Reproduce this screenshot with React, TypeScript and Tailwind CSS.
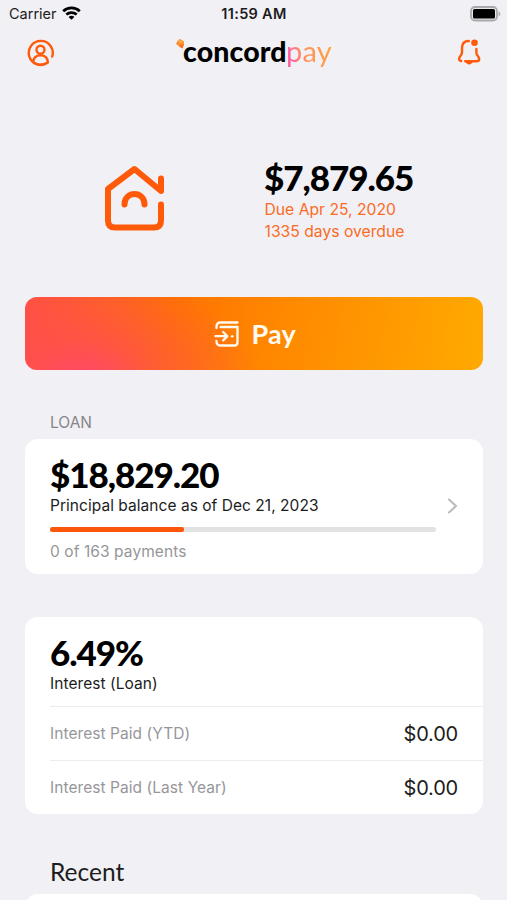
import type { ReactNode } from "react";

const display = "font-['Lato','Liberation_Sans',sans-serif]";

function StatusBar() {
  return (
    <div className="grid h-7 grid-cols-3 items-center pl-[9px] pr-[6px] text-[#1c1c1e]">
      <div className="flex items-center gap-[5px]">
        <span className="text-[14.5px] leading-7">Carrier</span>
        <svg className="-mt-[2px]" width="19" height="14" viewBox="0 0 19 14" fill="none" stroke="#000" strokeWidth="2.7">
          <path d="M1.2 5.2C5.8.8 13.2.8 17.8 5.2" />
          <path d="M4.3 8.5c2.9-2.6 7.500-2.6 10.400 0" />
          <path d="M6.6 10.9c1.6-1.4 4.200-1.4 5.800 0L9.5 13.8z" fill="#000" stroke="none" />
        </svg>
      </div>
      <span className="-ml-[2px] text-center text-[14.5px] font-semibold leading-7 tracking-[0.3px]">11:59 AM</span>
      <svg className="-mt-px justify-self-end" width="31" height="16" viewBox="0 0 31 16">
        <rect x="1" y="1" width="26" height="13.5" rx="4" fill="#e8e8ea" stroke="#aaaaad" strokeWidth="1.8" />
        <rect x="3" y="3" width="22" height="9.5" rx="1.6" fill="#000" />
        <path d="M28.6 5.5c2.3.7 2.3 4 0 4.8z" fill="#aaaaad" />
      </svg>
    </div>
  );
}

function Logo() {
  return (
    <div className={`-ml-[3px] -mt-[2px] flex items-start ${display}`}>
      <svg className="mt-[6px] shrink-0" width="9" height="10" viewBox="0 0 9 10">
        <path d="M4 0 8 2.6 7.800 6 6.200 9.5 3.400 7.600 0 5 1.600 2z" fill="#ff8a32" />
        <path d="M4 0 8 2.600 5 5.200 1.600 2z" fill="#f9a845" />
        <path d="M5 5.200 8 5.600 6.200 9.500 3.400 7.600z" fill="#ff6f1c" />
      </svg>
      <span className="-ml-[2px] w-[103px] whitespace-nowrap text-[28.5px] font-black leading-9 tracking-[0.1px] text-black">concord</span>
      <span className="whitespace-nowrap bg-[linear-gradient(75deg,#ff5fa2_12%,#ff9060_38%,#ffa23c_90%)] bg-clip-text text-[29px] font-normal leading-9 tracking-[0.2px] text-transparent">pay</span>
    </div>
  );
}

function Header() {
  return (
    <header className="flex h-12 items-center justify-between pl-[27px] pr-[26px]">
      <svg className="mt-px" width="27" height="28" viewBox="0 0 27 28" fill="none" stroke="#ff5a0a" strokeWidth="2.4" strokeLinecap="round">
        <path d="M20.8 23.6A12 12 0 1 1 25.2 17.500" />
        <circle cx="13.5" cy="10.8" r="4" />
        <path d="M6.2 23.2c.2-4.5 3.2-6.8 7.3-6.8s7.1 2.3 7.3 6.8c-4 3.4-10.6 3.4-14.6 0z" strokeLinejoin="round" />
      </svg>
      <Logo />
      <svg width="24" height="28" viewBox="0 0 24 28" fill="none" stroke="#ff5a0a" strokeWidth="2.4" strokeLinecap="round" strokeLinejoin="round">
        <path d="M11.8 3C7.2 3 5 6 5 10v4.800c0 2.6-2.9 3.4-2.9 6 0 1.3.8 1.9 2.1 2.2" />
        <path d="M19.4 11v4c0 2.6 2.8 3.4 2.8 5.9 0 1.6-1.2 2.3-2.8 2.3H8.2" />
        <path d="M8.4 23.3h7.4c-.4 4-6.8 4.200-7.4 0z" fill="#ff5a0a" stroke="none" />
        <circle cx="17.5" cy="4.8" r="3.3" fill="#ff5a0a" stroke="none" />
      </svg>
    </header>
  );
}

function Amount({ children }: { children: ReactNode }) {
  return <div className={`h-9 whitespace-nowrap text-[35px] font-black leading-[34px] tracking-[-1.05px] text-black ${display}`}>{children}</div>;
}

function DueSummary() {
  return (
    <section className="flex h-[221px] pl-[104px] pt-[84px]">
      <svg className="mt-[4px] shrink-0" width="62" height="68" viewBox="0 0 62 68" fill="none" stroke="#ff5a0a" strokeWidth="6" strokeLinecap="round" strokeLinejoin="round">
        <path d="M57 14.500v12.5L30.5 5 4 25V56.500q0 7 7 7h39q7 0 7-7V40.500" />
        <path d="M20.500 40.500c0-14 20-14 20 0" />
      </svg>
      <div className="ml-[98px]">
        <Amount>$7,879.65</Amount>
        <div className="ml-[0.5px] mt-[3px] text-[15.7px] leading-[22px] text-[#fa6c26]">
          <p>Due Apr 25, 2020</p>
          <p>1335 days overdue</p>
        </div>
      </div>
    </section>
  );
}

function PayButton() {
  return (
    <button className="mx-[25px] flex h-[73px] w-[457.500px] items-center justify-center gap-3 rounded-[12px] bg-[radial-gradient(ellipse_175px_105px_at_60px_80px,#ff4968_0%,#ff4c5a99_35%,#ff5a2a00_100%),linear-gradient(100deg,#ff5140_0%,#ff7300_32%,#ff8800_55%,#ffaa00_100%)] pl-[2px] text-[#fffaf0]">
      <svg width="26" height="26" viewBox="0 0 26 26" fill="none" stroke="currentColor" strokeWidth="2.3" strokeLinecap="round" strokeLinejoin="round">
        <path d="M2.500 7V5.500q0-4 4-4H23.500" />
        <path d="M6.500 6h17v15.500q0 3-3 3H6.500q-4 0-4-4V20" />
        <path d="M1.500 15.200H12.500M9.200 11l4.200 4.200-4.200 4.200" />
        <circle cx="18.200" cy="15.200" r="1.300" fill="currentColor" stroke="none" />
      </svg>
      <span className={`text-[27px] font-bold leading-9 tracking-[0.2px] ${display}`}>Pay</span>
    </button>
  );
}

function LoanCard() {
  return (
    <section className="mx-[25px] h-[135px] w-[458px] rounded-[13px] bg-white pl-[25px] pr-[25px] pt-[18px]">
      <Amount>$18,829.20</Amount>
      <div className="mt-px flex h-6 items-center justify-between">
        <span className="text-[15.500px] leading-6 tracking-[0.04px] text-[#1c1c1e]">Principal balance as of Dec 21, 2023</span>
        <svg width="11" height="16" viewBox="0 0 11 16" fill="none" stroke="#bcbcbe" strokeWidth="2.1" strokeLinecap="round" strokeLinejoin="round">
          <path d="m2 1.500 7 6.500-7 6.500" />
        </svg>
      </div>
      <div className="mt-[9px] h-[5px] w-[386px] overflow-hidden rounded-full bg-[#e2e2e2]">
        <div className="h-full w-[134px] rounded-r-[2px] bg-[#fc560a]" />
      </div>
      <p className="mt-[8px] text-[15.500px] leading-6 tracking-[0.08px] text-[#96969a]">0 of 163 payments</p>
    </section>
  );
}

function InterestRow({ label, value }: { label: string; value: string }) {
  return (
    <div className="ml-[25px] flex h-[54px] items-center justify-between border-t border-[#ececef] pr-[25px]">
      <span className="text-[15.500px] tracking-[0.06px] text-[#96969a]">{label}</span>
      <span className="text-[20px] tracking-[-0.2px] text-[#1c1c1e]">{value}</span>
    </div>
  );
}

function InterestCard() {
  return (
    <section className="mx-[25px] mt-[43px] h-[197px] w-[458px] rounded-[13px] bg-white">
      <div className="h-[89px] pl-[25px] pt-[18px]">
        <Amount>6.49%</Amount>
        <p className="mt-px text-[15.500px] leading-6 tracking-[0.06px] text-[#1c1c1e]">Interest (Loan)</p>
      </div>
      <InterestRow label="Interest Paid (YTD)" value="$0.00" />
      <InterestRow label="Interest Paid (Last Year)" value="$0.00" />
    </section>
  );
}

export default function App() {
  return (
    <main className="h-[900px] w-[507px] overflow-hidden bg-[#f1f0f5] font-['Inter','Liberation_Sans',sans-serif]">
      <StatusBar />
      <Header />
      <DueSummary />
      <PayButton />
      <h2 className="ml-[50px] mt-[42px] h-[27px] text-[15.5px] leading-[22px] text-[#85858a]">LOAN</h2>
      <LoanCard />
      <InterestCard />
      <h2 className={`ml-[50px] mt-[42px] h-[38px] text-[24.5px] leading-8 text-[#1c1c1e] ${display}`}>Recent</h2>
      <div className="mx-[25px] h-10 w-[458px] rounded-[13px] bg-white" />
    </main>
  );
}
